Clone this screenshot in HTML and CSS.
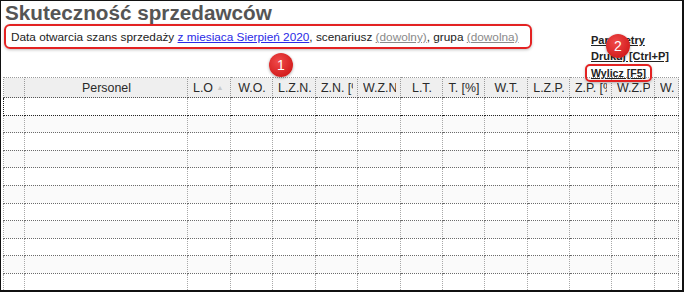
FILE: index.html
```html
<!DOCTYPE html>
<html lang="pl">
<head>
    <meta charset="UTF-8">
    <title>Skuteczność sprzedawców</title>
    <link rel="stylesheet" href="styles.css">
</head>
<body>
    <div class="frame">
        <h1 class="title">Skuteczność sprzedawców</h1>
        <div class="bar">
            <div class="filters">
                Data otwarcia szans sprzedaży <a class="link" href="#">z miesiaca Sierpień 2020</a>, scenariusz <a class="link muted" href="#">(dowolny)</a>, grupa <a class="link muted" href="#">(dowolna)</a>
            </div>
            <div class="actions">
                <a href="#">Parametry</a>
                <a href="#">Drukuj [Ctrl+P]</a>
                <a href="#" class="marked">Wylicz [F5]</a>
            </div>
        </div>
        <table class="grid">
            <colgroup>
                <col style="width:21px"><col style="width:163px"><col style="width:43px"><col style="width:42px">
                <col style="width:43px"><col style="width:42px"><col style="width:43px"><col style="width:42px">
                <col style="width:42px"><col style="width:43px"><col style="width:42px"><col style="width:42px">
                <col style="width:43px"><col style="width:24px">
            </colgroup>
            <thead>
                <tr>
                    <th><div></div></th>
                    <th><div>Personel</div></th>
                    <th class="sorted"><div>L.O <span class="arrow">&#9650;</span></div></th>
                    <th><div>W.O.</div></th>
                    <th><div>L.Z.N.</div></th>
                    <th><div>Z.N. [%]</div></th>
                    <th><div>W.Z.N.</div></th>
                    <th><div>L.T.</div></th>
                    <th><div>T. [%]</div></th>
                    <th><div>W.T.</div></th>
                    <th><div>L.Z.P.</div></th>
                    <th><div>Z.P. [%]</div></th>
                    <th><div>W.Z.P.</div></th>
                    <th><div>W. [%]</div></th>
                </tr>
            </thead>
            <tbody id="rows"></tbody>
        </table>
        <span class="badge badge-one">1</span>
        <span class="badge badge-two">2</span>
    </div>
    <script>
        const rows = document.getElementById('rows');
        for (let i = 0; i < 11; i++) {
            const tr = document.createElement('tr');
            if (i === 0) tr.className = 'current';
            for (let c = 0; c < 14; c++) {
                tr.appendChild(document.createElement('td'));
            }
            rows.appendChild(tr);
        }
    </script>
</body>
</html>
```

FILE: styles.css
```css
body {
    margin: 0;
    background: #fff;
    font-family: "Liberation Sans", Arial, sans-serif;
}

.frame {
    position: relative;
    width: 684px;
    height: 292px;
    box-sizing: border-box;
    border: 1px solid #111;
    border-right-width: 2px;
    border-bottom-width: 2px;
    overflow: hidden;
    background: #fff;
}

.title {
    margin: 0;
    padding-left: 4px;
    height: 23px;
    line-height: 24px;
    font-size: 20.7px;
    font-weight: bold;
    color: #555;
}

.bar {
    display: flex;
    justify-content: space-between;
    height: 53px;
}

.filters {
    align-self: flex-start;
    margin-left: 3px;
    height: 25px;
    box-sizing: border-box;
    padding: 0 11px 0 5px;
    line-height: 22px;
    border: 2px solid #e32222;
    border-radius: 6px;
    box-shadow: 0 1px 3px rgba(0, 0, 0, 0.25);
    font-size: 11.8px;
    color: #222;
}

.link {
    color: #2a2ae6;
    text-decoration: underline;
}

.link.muted {
    color: #8a8a8a;
}

.actions {
    display: flex;
    flex-direction: column;
    align-items: flex-start;
    width: 91px;
    padding-top: 8px;
}

.actions a {
    height: 16px;
    line-height: 16px;
    font-size: 11px;
    font-weight: bold;
    color: #222;
    text-decoration: underline;
}

.actions a.marked {
    margin-left: -6px;
    padding: 0 4px;
    height: 18px;
    line-height: 15px;
    font-size: 10.6px;
    box-sizing: border-box;
    border: 2px solid #e32222;
    border-radius: 5px;
    box-shadow: 0 1px 3px rgba(0, 0, 0, 0.25);
}

.grid {
    margin-left: 2px;
    width: 676px;
    table-layout: fixed;
    border-collapse: collapse;
    font-size: 12.4px;
}

.grid th {
    height: 19px;
    padding: 0 4px 0 5px;
    background: #efefef;
    color: #2a2a2a;
    font-weight: normal;
    text-align: center;
    border: 1px dotted #9a9a9a;
    border-bottom-color: #555;
}

.grid th div {
    overflow: hidden;
    white-space: nowrap;
}

.grid th.sorted div {
    text-align: left;
}

.arrow {
    font-size: 7px;
    color: #c8c8c8;
    vertical-align: 2px;
}

.grid td {
    height: 16.6px;
    padding: 0;
    border-left: 1px dotted #a8a8a8;
    border-right: 1px dotted #a8a8a8;
    border-bottom: 1px dotted #6a6a6a;
}

.grid tbody tr:nth-child(even) td {
    background: #fafafa;
}

.grid tr.current td {
    border-top: 1px dotted #222;
    border-bottom: 1px dotted #222;
}

.grid tr.current td:first-child {
    border-left: 1px dotted #222;
}

.badge {
    position: absolute;
    width: 24px;
    height: 24px;
    border-radius: 50%;
    background: radial-gradient(circle at 40% 35%, #f04a4a, #d41f1f 70%);
    box-shadow: 0 1px 3px rgba(0, 0, 0, 0.35);
    color: #fff;
    font-size: 14px;
    line-height: 24px;
    text-align: center;
}

.badge-one {
    left: 268px;
    top: 52px;
}

.badge-two {
    left: 605px;
    top: 33px;
}
```
